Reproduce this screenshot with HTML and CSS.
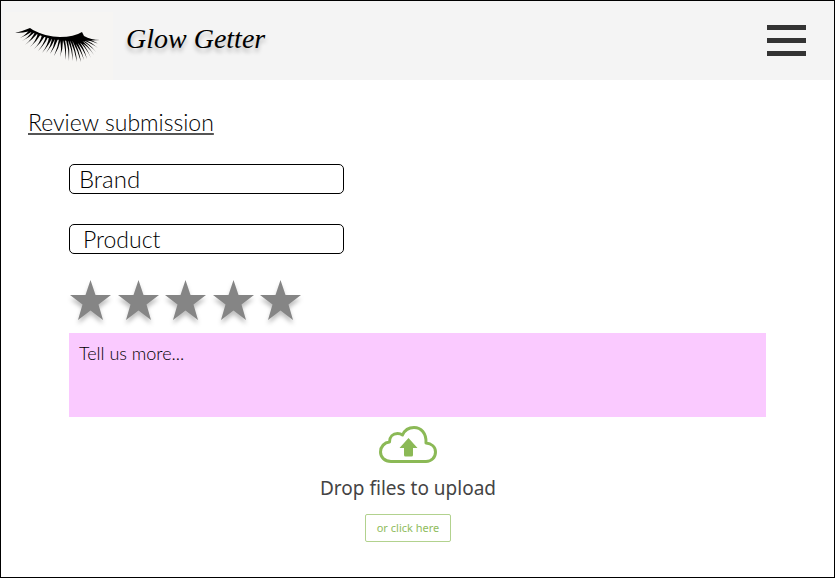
FILE: index.html
```html
<!DOCTYPE html>
<html lang="en">
<head>
<meta charset="utf-8">
<meta name="viewport" content="width=device-width, initial-scale=1">
<title>Glow Getter</title>
<link rel="stylesheet" href="styles.css">
</head>
<body>
<header class="site-header">
  <a class="brand" href="#">
    <span class="brand-mark">
      <svg class="lashes" viewBox="13 26 90 38" aria-hidden="true">
        <path d="M15 33Q23 31 30 28L33 30Q46 37 60 37Q74 37 82 32L84 36Q91 40 100 40L83 41Q72 42 60 40Q42 38 31 31Q23 33 15 33Z"/>
        <path d="M30 29Q26 35 20 38Q27 35 33 31ZM32 31Q29 37 22 41Q30 37 35 32ZM35 32Q32 39 25 45Q33 39 38 33ZM38 33Q36 41 30 47Q37 41 41 34ZM42 35Q40 43 34 49Q41 43 45 36ZM46 36Q44 44 38 51Q45 44 48 37ZM49 37Q48 45 42 53Q49 45 52 38ZM52 38Q51 46 46 53Q52 46 55 39ZM55 39Q54 47 50 54Q55 47 58 39ZM59 39Q58 47 54 56Q59 48 61 39Z"/>
        <path d="M60 40Q62 49 60 57Q63 49 63 40ZM63 40Q66 50 65 60Q67 50 65 40ZM66 40Q69 50 69 61Q70 50 68 40ZM68 40Q72 50 73 61Q73 50 70 40ZM70 40Q75 51 77 62Q76 50 72 40ZM72 40Q78 51 81 62Q79 50 74 40ZM73 40Q80 49 84 60Q81 48 76 40ZM75 40Q83 48 87 59Q84 47 78 40ZM77 40Q86 47 91 58Q86 46 79 39ZM78 40Q88 46 94 55Q88 45 80 39ZM79 39Q90 45 96 52Q90 44 81 39ZM80 39Q91 43 98 48Q91 42 82 38ZM81 38Q91 41 99 44Q92 40 83 37Z"/>
      </svg>
    </span>
    <span class="brand-name">Glow Getter</span>
  </a>
  <button class="menu" type="button" aria-label="Menu">
    <span class="menu-bar"></span><span class="menu-bar"></span><span class="menu-bar"></span>
  </button>
</header>
<main class="content">
  <h1 class="title">Review submission</h1>
  <form class="review">
    <input class="field" type="text" aria-label="Brand" placeholder="Brand">
    <input class="field" type="text" aria-label="Product" placeholder="Product">
    <fieldset class="rating" aria-label="Rating">
      <label class="star"><input type="radio" name="rating" value="1" aria-label="1 star"><svg viewBox="0 0 41 40" aria-hidden="true"><path d="M20.500 0L25.500 15H41L28.500 24.500L33 40L20.500 30.500L8 40L12.500 24.500L0 15H15.500Z"/></svg></label>
      <label class="star"><input type="radio" name="rating" value="2" aria-label="2 stars"><svg viewBox="0 0 41 40" aria-hidden="true"><path d="M20.500 0L25.500 15H41L28.500 24.500L33 40L20.500 30.500L8 40L12.500 24.500L0 15H15.500Z"/></svg></label>
      <label class="star"><input type="radio" name="rating" value="3" aria-label="3 stars"><svg viewBox="0 0 41 40" aria-hidden="true"><path d="M20.500 0L25.500 15H41L28.500 24.500L33 40L20.500 30.500L8 40L12.500 24.500L0 15H15.500Z"/></svg></label>
      <label class="star"><input type="radio" name="rating" value="4" aria-label="4 stars"><svg viewBox="0 0 41 40" aria-hidden="true"><path d="M20.500 0L25.500 15H41L28.500 24.500L33 40L20.500 30.500L8 40L12.500 24.500L0 15H15.500Z"/></svg></label>
      <label class="star"><input type="radio" name="rating" value="5" aria-label="5 stars"><svg viewBox="0 0 41 40" aria-hidden="true"><path d="M20.500 0L25.500 15H41L28.500 24.500L33 40L20.500 30.500L8 40L12.500 24.500L0 15H15.500Z"/></svg></label>
    </fieldset>
    <textarea class="comments" aria-label="Tell us more" placeholder="Tell us more..."></textarea>
    <section class="upload">
      <svg class="cloud" viewBox="0 0 58 38" aria-hidden="true">
        <path class="cloud-line" d="M12 35.500C5.500 35.500 1.500 31 1.500 26C1.500 20.500 5.500 16.500 10.500 16C10.500 10.500 14 7.500 18.500 7.500Q21.500 7.500 23.500 9C25.500 4.500 30 1.500 35 1.500C42 1.500 47.500 7 47 17C52.500 17.500 56.500 21 56.500 26C56.500 31.500 52.500 35.500 47 35.500Z"/>
        <path class="cloud-arrow" d="M29.500 12L38.500 22H34V29Q34 30.500 32.500 30.500H26.500Q25 30.500 25 29V22H20.500Z"/>
      </svg>
      <p class="upload-text">Drop files to upload</p>
      <button class="upload-button" type="button">or click here</button>
    </section>
  </form>
</main>
</body>
</html>
```
FILE: styles.css
```css
* {
  box-sizing: border-box;
}

body {
  margin: 0;
  min-height: 100vh;
  border: 1px solid #000;
  background: #fff;
  color: #000;
  font-family: Lato, "Liberation Sans", sans-serif;
  font-weight: 300;
}

.site-header {
  display: flex;
  align-items: center;
  justify-content: space-between;
  padding: 0 28px 0 4px;
  background: #f4f4f4;
}

.brand {
  display: flex;
  align-items: flex-start;
  gap: 13px;
  color: #000;
  text-decoration: none;
}

.brand-mark {
  width: 108px;
  height: 68px;
  margin-top: 11px;
  padding: 14px 8px;
  background: #f6f5f3;
}

.lashes {
  display: block;
  width: 90px;
  height: 38px;
}

.brand-name {
  padding-top: 18px;
  font: italic 28px/40px "Liberation Serif", serif;
  text-shadow: 0 4px 4px rgba(0, 0, 0, 0.25);
}

.menu {
  display: flex;
  flex-direction: column;
  gap: 8px;
  padding: 0;
  border: 0;
  background: none;
}

.menu-bar {
  width: 39px;
  height: 5px;
  background: #333;
}

.content {
  padding: 24px 68px 32px;
}

.title {
  margin: 0 0 24px -41px;
  font-size: 23px;
  line-height: 36px;
  font-weight: 300;
  text-decoration: underline #555;
  text-decoration-thickness: 2px;
  text-decoration-skip-ink: none;
  text-underline-offset: 2px;
}

.review {
  display: flex;
  flex-direction: column;
}

.field {
  width: 275px;
  height: 30px;
  margin-bottom: 30px;
  padding: 0 9px 2px;
  border: 1px solid #000;
  border-radius: 5px;
  background: #fff;
  font: inherit;
  font-size: 24px;
}

.field + .field {
  margin-bottom: 26px;
  padding: 0 13px;
  font-size: 23px;
}

.field::placeholder,
.comments::placeholder {
  color: #000;
  opacity: 1;
}

.rating {
  display: flex;
  justify-content: space-between;
  width: 231px;
  margin: 0 0 13px 1px;
  padding: 0;
  border: 0;
}

.star {
  position: relative;
  width: 41px;
  height: 40px;
}

.star input {
  position: absolute;
  inset: 0;
  margin: 0;
  opacity: 0;
}

.star svg {
  display: block;
  width: 41px;
  height: 40px;
  overflow: visible;
  fill: #858585;
  filter: drop-shadow(0 4px 2px rgba(0, 0, 0, 0.25));
}

.comments {
  display: block;
  width: 100%;
  height: 84px;
  padding: 8px 10px;
  border: 0;
  background: #facaff;
  font: inherit;
  font-size: 18px;
  line-height: 24px;
  resize: none;
}

.upload {
  display: flex;
  flex-direction: column;
  align-items: center;
  padding: 9px 19px 0 0;
}

.cloud {
  width: 58px;
  height: 38px;
}

.cloud-line {
  fill: none;
  stroke: #8bb956;
  stroke-width: 3;
  stroke-linejoin: round;
}

.cloud-arrow {
  fill: #8bb956;
}

.upload-text {
  margin: 11px 0 13px;
  color: #444;
  font: 400 19px/26px "Noto Sans", sans-serif;
}

.upload-button {
  width: 86px;
  height: 28px;
  padding: 0;
  border: 1px solid #b2d28e;
  border-radius: 2px;
  background: #fff;
  color: #8fbc5c;
  font: 400 11px/16px "Noto Sans", sans-serif;
}
```
